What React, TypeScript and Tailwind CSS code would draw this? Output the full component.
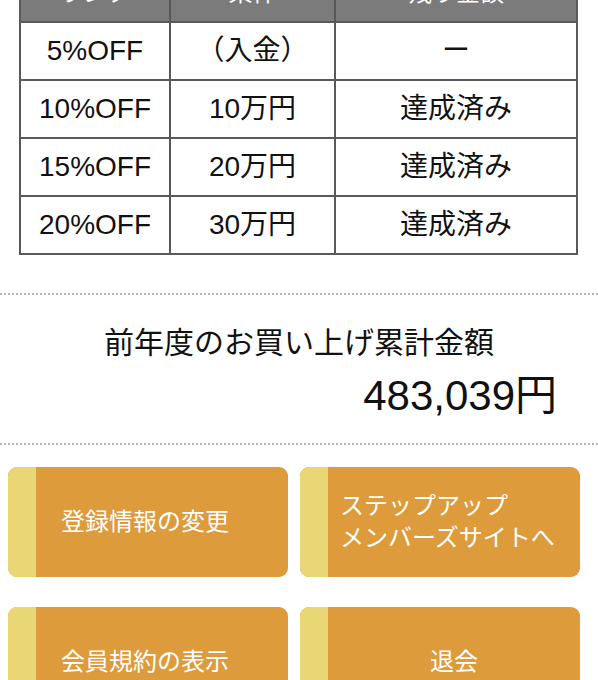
import React from 'react';

const font = { fontFamily: '"Liberation Sans", "Noto Sans CJK JP", sans-serif' };

const rows = [
  { rank: '5%OFF', cond: '（入金）', rest: 'ー' },
  { rank: '10%OFF', cond: '10万円', rest: '達成済み' },
  { rank: '15%OFF', cond: '20万円', rest: '達成済み' },
  { rank: '20%OFF', cond: '30万円', rest: '達成済み' },
];

interface MenuButtonProps {
  children: React.ReactNode;
  textClass: string;
}

function MenuButton({ children, textClass }: MenuButtonProps) {
  return (
    <a href="#" className="flex h-[110px] overflow-hidden rounded-[9px] bg-[#dd9b3c]">
      <span className="w-[28px] shrink-0 bg-[#e9d674]"></span>
      <span className={`flex flex-1 items-center text-[24px] leading-[32px] text-white ${textClass}`}>
        {children}
      </span>
    </a>
  );
}

export default function App() {
  return (
    <div className="-mt-[37px] min-h-screen bg-white text-[#111]" style={font}>
      {/* rank table */}
      <div className="px-[19px] pr-[20px]">
        <table className="w-full table-fixed border-collapse text-center text-[28px]">
          <colgroup>
            <col className="w-[150px]" />
            <col className="w-[165px]" />
            <col />
          </colgroup>
          <thead>
            <tr className="bg-[#7b7b7b] text-white">
              <th className="h-[58px] border-2 border-[#595959] text-[24px] font-normal">ランク</th>
              <th className="h-[58px] border-2 border-[#595959] text-[24px] font-normal">条件</th>
              <th className="h-[58px] border-2 border-[#595959] text-[24px] font-normal">残り金額</th>
            </tr>
          </thead>
          <tbody>
            {rows.map((r) => (
              <tr key={r.rank}>
                <td className="h-[58px] border-2 border-[#595959]">{r.rank}</td>
                <td className="h-[58px] border-2 border-[#595959]">{r.cond}</td>
                <td className="h-[58px] border-2 border-[#595959]">{r.rest}</td>
              </tr>
            ))}
          </tbody>
        </table>
      </div>

      {/* yearly total */}
      <div className="mt-[38px] border-y-2 border-dotted border-[#b5b5b5] pb-[23px] pt-[28px]">
        <p className="text-center text-[30px] leading-[40px]">前年度のお買い上げ累計金額</p>
        <p className="mt-[9px] pr-[41px] text-right text-[42px] leading-[48px]">483,039円</p>
      </div>

      {/* menu */}
      <div className="grid grid-cols-2 gap-x-[12px] gap-y-[30px] pl-[8px] pr-[18px] pt-[22px] pb-[30px]">
        <MenuButton textClass="pl-[25px]">登録情報の変更</MenuButton>
        <MenuButton textClass="pl-[12px]">
          ステップアップ
          <br />
          メンバーズサイトへ
        </MenuButton>
        <MenuButton textClass="pl-[25px]">会員規約の表示</MenuButton>
        <MenuButton textClass="justify-center">退会</MenuButton>
      </div>
    </div>
  );
}
